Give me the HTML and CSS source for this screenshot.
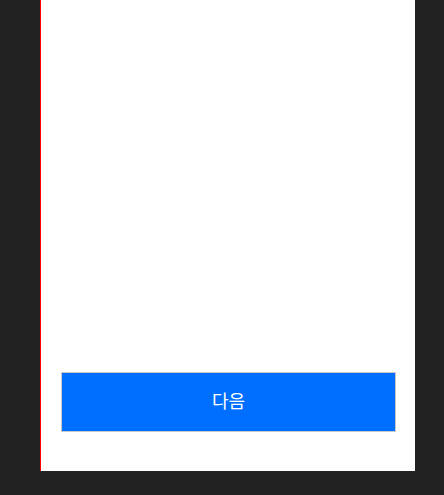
FILE: index.html
```html
<!DOCTYPE html>
<html lang="ko">
<head>
    <meta charset="UTF-8">
    <meta name="viewport" content="width=device-width, initial-scale=1.0">
    <title>다음</title>
    <link rel="stylesheet" href="styles.css">
</head>
<body>
    <div class="frame">
        <div class="content"></div>
        <button class="next-btn">다음</button>
    </div>
</body>
</html>
```

FILE: styles.css
```css
html, body {
    margin: 0;
    background-color: #222222;
    font-family: "Noto Sans CJK KR", "Noto Sans", sans-serif;
}
.frame {
    width: 375px;
    height: 471px;
    margin-left: 40px;
    box-sizing: border-box;
    border-left: 1px solid red;
    background-color: #ffffff;
    display: flex;
    flex-direction: column;
    padding: 0 19px 39px 20px;
}
.content {
    flex: 1;
}
.next-btn {
    height: 60px;
    width: 100%;
    border: 1px solid #c8c8c8;
    background-color: #006fff;
    color: white;
    font-family: inherit;
    font-size: 18px;
    padding: 0 0 5px;
    cursor: pointer;
}
```
